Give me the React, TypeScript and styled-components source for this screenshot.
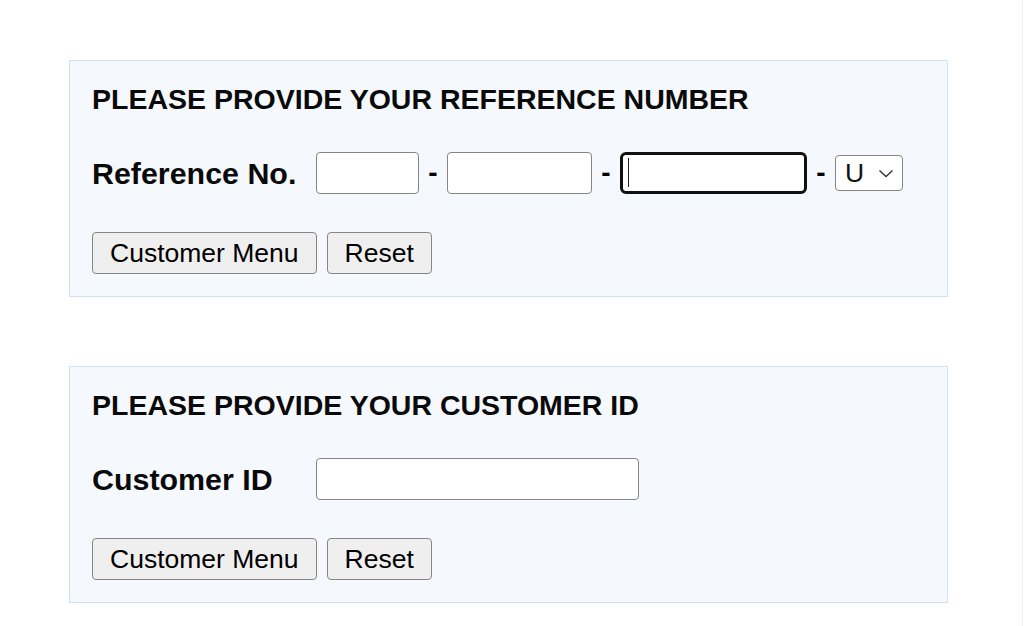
import React from "react";
import styled, { createGlobalStyle } from "styled-components";

const GlobalStyle = createGlobalStyle`
  html, body {
    margin: 0;
    padding: 0;
    background: #ffffff;
  }
  body {
    font-family: "Liberation Sans", Arial, sans-serif;
    color: #000;
  }
`;

const Page = styled.main`
  box-sizing: border-box;
  width: 1023px;
  min-height: 626px;
  border-right: 1px solid #f0f0f0;
  padding: 60px 0 0 69px;
  display: flex;
  flex-direction: column;
  gap: 69px;
`;

const Panel = styled.section`
  box-sizing: border-box;
  width: 879px;
  height: 237px;
  border: 1px solid #cfe2f3;
  background: #f5f9fe;
  padding: 22px;
  display: flex;
  flex-direction: column;
`;

const Heading = styled.h2`
  margin: 0;
  font-size: 28.5px;
  line-height: 32px;
  font-weight: 700;
  color: #0a0a0a;
`;

const FieldRow = styled.div`
  display: flex;
  align-items: center;
  height: 42px;
  margin-top: 37px;
`;

const Label = styled.label`
  flex: none;
  width: 224px;
  font-size: 30.4px;
  font-weight: 700;
  line-height: 42px;
  color: #0a0a0a;
`;

const TextInput = styled.input<{ $w: number; $focused?: boolean }>`
  box-sizing: border-box;
  flex: none;
  width: ${(p) => p.$w}px;
  height: 42px;
  margin: 0;
  padding: 0 6px;
  background: #fff;
  border: ${(p) => (p.$focused ? "3px solid #111" : "1px solid #858585")};
  border-radius: ${(p) => (p.$focused ? "6px" : "4px")};
  font-family: "Liberation Sans", Arial, sans-serif;
  font-size: 26px;
  outline: none;
`;

const Dash = styled.span`
  flex: none;
  width: 28px;
  text-align: center;
  font-size: 28px;
  font-weight: 700;
  line-height: 42px;
`;

const FocusWrap = styled.div`
  position: relative;
  flex: none;
  display: flex;
`;

const Caret = styled.span`
  position: absolute;
  left: 8px;
  top: 6px;
  width: 1px;
  height: 29px;
  background: #222;
`;

const SelectWrap = styled.div`
  position: relative;
  flex: none;
  display: flex;
`;

const Select = styled.select`
  box-sizing: border-box;
  appearance: none;
  -webkit-appearance: none;
  width: 68px;
  height: 36px;
  margin: 0;
  padding: 0 0 0 9px;
  background: #fff;
  border: 1px solid #858585;
  border-radius: 4px;
  font-family: "Liberation Sans", Arial, sans-serif;
  font-size: 26.5px;
  color: #111;
  outline: none;
`;

const Chevron = styled.svg`
  position: absolute;
  right: 9px;
  top: 14px;
  pointer-events: none;
`;

const ButtonRow = styled.div`
  display: flex;
  gap: 10px;
  margin-top: 38px;
`;

const Button = styled.button`
  box-sizing: border-box;
  height: 42px;
  margin: 0;
  padding: 0 17px;
  background: #efefef;
  border: 1px solid #858585;
  border-radius: 4px;
  font-family: "Liberation Sans", Arial, sans-serif;
  font-size: 26.5px;
  color: #000;
  cursor: pointer;
`;

const Buttons = () => (
  <ButtonRow>
    <Button type="button">Customer Menu</Button>
    <Button type="reset">Reset</Button>
  </ButtonRow>
);

export default function App() {
  return (
    <>
      <GlobalStyle />
      <Page>
        <Panel as="form">
          <Heading>PLEASE PROVIDE YOUR REFERENCE NUMBER</Heading>
          <FieldRow>
            <Label>Reference No.</Label>
            <TextInput $w={103} />
            <Dash>-</Dash>
            <TextInput $w={145} />
            <Dash>-</Dash>
            <FocusWrap>
              <TextInput $w={187} $focused />
              <Caret />
            </FocusWrap>
            <Dash>-</Dash>
            <SelectWrap>
              <Select defaultValue="U">
                <option value="U">U</option>
              </Select>
              <Chevron width="16" height="9" viewBox="0 0 16 9">
                <path d="M1.5 1.5 L8 7.5 L14.5 1.5" fill="none" stroke="#333" strokeWidth="1.4" />
              </Chevron>
            </SelectWrap>
          </FieldRow>
          <Buttons />
        </Panel>
        <Panel as="form">
          <Heading>PLEASE PROVIDE YOUR CUSTOMER ID</Heading>
          <FieldRow>
            <Label>Customer ID</Label>
            <TextInput $w={323} />
          </FieldRow>
          <Buttons />
        </Panel>
      </Page>
    </>
  );
}
